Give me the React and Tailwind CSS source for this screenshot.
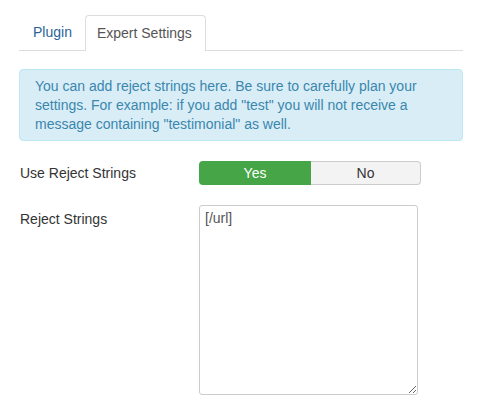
export default function App() {
  return (
    <div className="min-h-[400px] bg-white pr-[17px] pl-[19px] pt-[15px] text-[14px] text-[#333] [font-family:'Liberation_Sans',Arial,sans-serif]">
      {/* tabs */}
      <div className="flex border-b border-[#ddd] pl-[1px]">
        <div className="flex h-[35px] items-center px-[13px] text-[#2a6496]">Plugin</div>
        <div className="-mb-px flex h-[36px] items-center rounded-t-[4px] border border-b-0 border-[#ddd] bg-white pl-[11px] pr-[13px] text-[#555]">
          Expert Settings
        </div>
      </div>

      {/* alert */}
      <div className="mt-[18px] rounded-[4px] border border-[#bce8f1] bg-[#d9edf7] px-[15px] pt-[7px] pb-[6px] leading-[19px] text-[#3a87ad]">
        You can add reject strings here. Be sure to carefully plan your settings. For example: if you add "test" you will not receive a message containing "testimonial" as well.
      </div>

      {/* toggle row */}
      <div className="mt-[20px] flex items-center">
        <div className="w-[180px] pl-px">Use Reject Strings</div>
        <div className="flex h-[24px] w-[222px]">
          <div className="flex w-[112px] items-center justify-center rounded-l-[4px] bg-[#46a546] text-white">Yes</div>
          <div className="flex flex-1 items-center justify-center rounded-r-[4px] border border-l-0 border-[#ccc] bg-[#f3f3f3] text-[#333]">No</div>
        </div>
      </div>

      {/* textarea row */}
      <div className="mt-[20px] flex items-start">
        <div className="w-[180px] pt-[4px] pl-px">Reject Strings</div>
        <textarea
          defaultValue="[/url]"
          className="h-[190px] w-[219px] rounded-[3px] border border-[#ccc] px-[5px] pt-[3px] leading-[18px] text-[#555] outline-none"
        />
      </div>
    </div>
  )
}
